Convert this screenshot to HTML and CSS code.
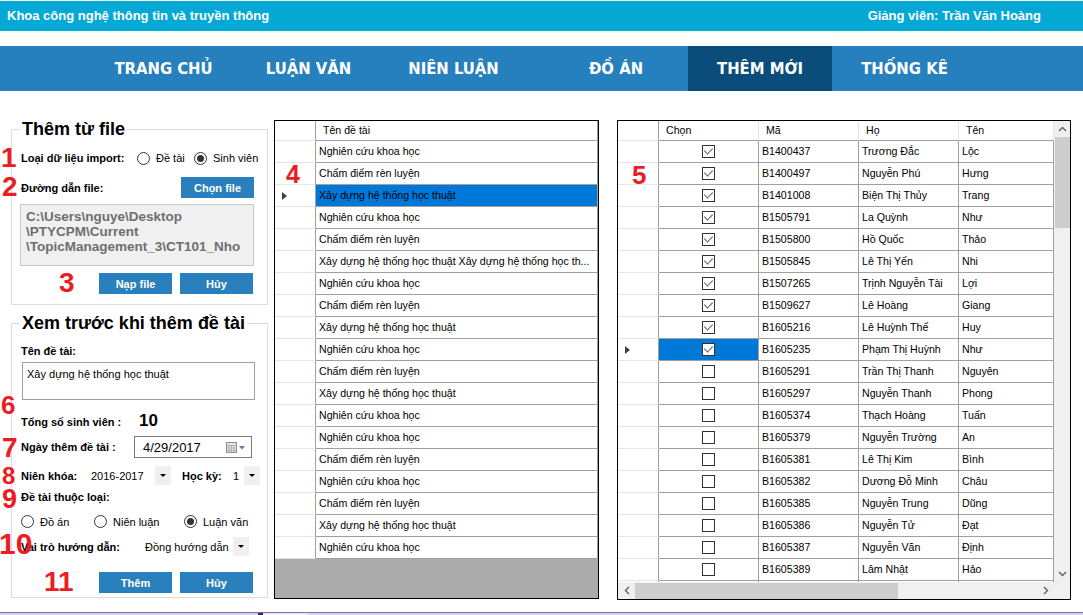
FILE: index.html
```html
<!DOCTYPE html>
<html lang="vi">
<head>
<meta charset="utf-8">
<title>Thêm mới</title>
<link rel="stylesheet" href="styles.css">
</head>
<body>
<header class="topbar">
  <span>Khoa công nghệ thông tin và truyền thông</span>
  <span>Giảng viên: Trần Văn Hoàng</span>
</header>
<nav class="menu">
  <a class="tab">TRANG CHỦ</a>
  <a class="tab">LUẬN VĂN</a>
  <a class="tab">NIÊN LUẬN</a>
  <a class="tab t4">ĐỒ ÁN</a>
  <a class="tab active">THÊM MỚI</a>
  <a class="tab">THỐNG KÊ</a>
</nav>
<main class="content">
  <aside class="side">
    <fieldset class="group g-file">
      <legend>Thêm từ file</legend>
      <div class="row r-import">
        <span class="lbl w-import">Loại dữ liệu import:</span>
        <span class="radio w-r1"><i class="dot"></i>Đề tài</span>
        <span class="radio on"><i class="dot"></i>Sinh viên</span>
      </div>
      <div class="row r-path">
        <span class="lbl">Đường dẫn file:</span>
        <button class="btn">Chọn file</button>
      </div>
      <div class="pathbox">C:\Users\nguye\Desktop<br>\PTYCPM\Current<br>\TopicManagement_3\CT101_Nho</div>
      <div class="row r-btns">
        <button class="btn">Nạp file</button>
        <button class="btn">Hủy</button>
      </div>
    </fieldset>
    <fieldset class="group g-preview">
      <legend>Xem trước khi thêm đề tài</legend>
      <div class="lbl l-name">Tên đề tài:</div>
      <div class="textbox">Xây dựng hệ thống học thuật</div>
      <div class="row r-total">
        <span class="lbl w-total">Tổng số sinh viên :</span>
        <span class="bignum">10</span>
      </div>
      <div class="row r-date">
        <span class="lbl w-date">Ngày thêm đề tài :</span>
        <span class="date">4/29/2017
          <svg class="cal" width="20" height="11" viewBox="0 0 20 11"><rect x="0.5" y="0.5" width="10" height="10" fill="#e6e6e6" stroke="#8c8c8c"/><path d="M0.5 3.5h10M0.5 6h10M0.5 8.5h10M3 3.5v7M5.5 3.5v7M8 3.5v7" stroke="#a8a8a8" stroke-width="0.8"/><path d="M13 4h6l-3 3.5z" fill="#5b7faf"/></svg>
        </span>
      </div>
      <div class="row r-year">
        <span class="lbl w-year">Niên khóa:</span>
        <span class="val w-yval">2016-2017</span>
        <span class="drop"></span>
        <span class="lbl w-term">Học kỳ:</span>
        <span class="val w-tval">1</span>
        <span class="drop"></span>
      </div>
      <div class="lbl l-type">Đề tài thuộc loại:</div>
      <div class="row r-types">
        <span class="radio w-t1"><i class="dot"></i>Đồ án</span>
        <span class="radio w-t2"><i class="dot"></i>Niên luận</span>
        <span class="radio on"><i class="dot"></i>Luận văn</span>
      </div>
      <div class="row r-role">
        <span class="lbl w-role">Vai trò hướng dẫn:</span>
        <span class="val w-rval">Đồng hướng dẫn</span>
        <span class="drop"></span>
      </div>
      <div class="row r-btns2">
        <button class="btn">Thêm</button>
        <button class="btn">Hủy</button>
      </div>
    </fieldset>
  </aside>

  <section class="grid1">
    <div class="g1row head"><div class="rh"></div><div class="cell">Tên đề tài</div></div>
    <div class="g1row"><div class="rh"></div><div class="cell">Nghiên cứu khoa học</div></div>
    <div class="g1row"><div class="rh"></div><div class="cell">Chấm điểm rèn luyện</div></div>
    <div class="g1row sel"><div class="rh"></div><div class="cell">Xây dựng hệ thống học thuật</div></div>
    <div class="g1row"><div class="rh"></div><div class="cell">Nghiên cứu khoa học</div></div>
    <div class="g1row"><div class="rh"></div><div class="cell">Chấm điểm rèn luyện</div></div>
    <div class="g1row"><div class="rh"></div><div class="cell">Xây dựng hệ thống học thuật Xây dựng hệ thống học th...</div></div>
    <div class="g1row"><div class="rh"></div><div class="cell">Nghiên cứu khoa học</div></div>
    <div class="g1row"><div class="rh"></div><div class="cell">Chấm điểm rèn luyện</div></div>
    <div class="g1row"><div class="rh"></div><div class="cell">Xây dựng hệ thống học thuật</div></div>
    <div class="g1row"><div class="rh"></div><div class="cell">Nghiên cứu khoa học</div></div>
    <div class="g1row"><div class="rh"></div><div class="cell">Chấm điểm rèn luyện</div></div>
    <div class="g1row"><div class="rh"></div><div class="cell">Xây dựng hệ thống học thuật</div></div>
    <div class="g1row"><div class="rh"></div><div class="cell">Nghiên cứu khoa học</div></div>
    <div class="g1row"><div class="rh"></div><div class="cell">Nghiên cứu khoa học</div></div>
    <div class="g1row"><div class="rh"></div><div class="cell">Chấm điểm rèn luyện</div></div>
    <div class="g1row"><div class="rh"></div><div class="cell">Nghiên cứu khoa học</div></div>
    <div class="g1row"><div class="rh"></div><div class="cell">Chấm điểm rèn luyện</div></div>
    <div class="g1row"><div class="rh"></div><div class="cell">Xây dựng hệ thống học thuật</div></div>
    <div class="g1row"><div class="rh"></div><div class="cell">Nghiên cứu khoa học</div></div>
  </section>

  <section class="grid2">
    <div class="viewport">
      <div class="g2row head"><div class="rh"></div><div class="cell hc">Chọn</div><div class="cell hc">Mã</div><div class="cell hc">Họ</div><div class="cell hc">Tên</div></div>
      <div class="g2row"><div class="rh"></div><div class="cell chk"><i class="cb on"></i></div><div class="cell">B1400437</div><div class="cell">Trương Đắc</div><div class="cell">Lộc</div></div>
      <div class="g2row"><div class="rh"></div><div class="cell chk"><i class="cb on"></i></div><div class="cell">B1400497</div><div class="cell">Nguyễn Phú</div><div class="cell">Hưng</div></div>
      <div class="g2row"><div class="rh"></div><div class="cell chk"><i class="cb on"></i></div><div class="cell">B1401008</div><div class="cell">Biện Thị Thủy</div><div class="cell">Trang</div></div>
      <div class="g2row"><div class="rh"></div><div class="cell chk"><i class="cb on"></i></div><div class="cell">B1505791</div><div class="cell">La Quỳnh</div><div class="cell">Như</div></div>
      <div class="g2row"><div class="rh"></div><div class="cell chk"><i class="cb on"></i></div><div class="cell">B1505800</div><div class="cell">Hồ Quốc</div><div class="cell">Thảo</div></div>
      <div class="g2row"><div class="rh"></div><div class="cell chk"><i class="cb on"></i></div><div class="cell">B1505845</div><div class="cell">Lê Thị Yến</div><div class="cell">Nhi</div></div>
      <div class="g2row"><div class="rh"></div><div class="cell chk"><i class="cb on"></i></div><div class="cell">B1507265</div><div class="cell">Trịnh Nguyễn Tài</div><div class="cell">Lợi</div></div>
      <div class="g2row"><div class="rh"></div><div class="cell chk"><i class="cb on"></i></div><div class="cell">B1509627</div><div class="cell">Lê Hoàng</div><div class="cell">Giang</div></div>
      <div class="g2row"><div class="rh"></div><div class="cell chk"><i class="cb on"></i></div><div class="cell">B1605216</div><div class="cell">Lê Huỳnh Thế</div><div class="cell">Huy</div></div>
      <div class="g2row sel"><div class="rh"></div><div class="cell chk"><i class="cb on"></i></div><div class="cell">B1605235</div><div class="cell">Phạm Thị Huỳnh</div><div class="cell">Như</div></div>
      <div class="g2row"><div class="rh"></div><div class="cell chk"><i class="cb"></i></div><div class="cell">B1605291</div><div class="cell">Trần Thị Thanh</div><div class="cell">Nguyên</div></div>
      <div class="g2row"><div class="rh"></div><div class="cell chk"><i class="cb"></i></div><div class="cell">B1605297</div><div class="cell">Nguyễn Thanh</div><div class="cell">Phong</div></div>
      <div class="g2row"><div class="rh"></div><div class="cell chk"><i class="cb"></i></div><div class="cell">B1605374</div><div class="cell">Thạch Hoàng</div><div class="cell">Tuấn</div></div>
      <div class="g2row"><div class="rh"></div><div class="cell chk"><i class="cb"></i></div><div class="cell">B1605379</div><div class="cell">Nguyễn Trường</div><div class="cell">An</div></div>
      <div class="g2row"><div class="rh"></div><div class="cell chk"><i class="cb"></i></div><div class="cell">B1605381</div><div class="cell">Lê Thị Kim</div><div class="cell">Bình</div></div>
      <div class="g2row"><div class="rh"></div><div class="cell chk"><i class="cb"></i></div><div class="cell">B1605382</div><div class="cell">Dương Đỗ Minh</div><div class="cell">Châu</div></div>
      <div class="g2row"><div class="rh"></div><div class="cell chk"><i class="cb"></i></div><div class="cell">B1605385</div><div class="cell">Nguyễn Trung</div><div class="cell">Dũng</div></div>
      <div class="g2row"><div class="rh"></div><div class="cell chk"><i class="cb"></i></div><div class="cell">B1605386</div><div class="cell">Nguyễn Tử</div><div class="cell">Đạt</div></div>
      <div class="g2row"><div class="rh"></div><div class="cell chk"><i class="cb"></i></div><div class="cell">B1605387</div><div class="cell">Nguyễn Văn</div><div class="cell">Định</div></div>
      <div class="g2row"><div class="rh"></div><div class="cell chk"><i class="cb"></i></div><div class="cell">B1605389</div><div class="cell">Lâm Nhật</div><div class="cell">Hảo</div></div>
      <div class="g2row"><div class="rh"></div><div class="cell chk"></div><div class="cell"></div><div class="cell"></div><div class="cell"></div></div>
    </div>
    <div class="vscroll">
      <span class="sbtn"><svg width="9" height="6" viewBox="0 0 9 6"><polyline points="1,5 4.5,1.5 8,5" fill="none" stroke="#606060" stroke-width="1.4"/></svg></span>
      <span class="vthumb"></span>
      <span class="sbtn end"><svg width="9" height="6" viewBox="0 0 9 6"><polyline points="1,1 4.5,4.5 8,1" fill="none" stroke="#606060" stroke-width="1.4"/></svg></span>
    </div>
    <div class="hscroll">
      <span class="hbtn"><svg width="6" height="9" viewBox="0 0 6 9"><polyline points="5,1 1.5,4.5 5,8" fill="none" stroke="#606060" stroke-width="1.4"/></svg></span>
      <span class="hthumb"></span>
      <span class="hbtn end"><svg width="6" height="9" viewBox="0 0 6 9"><polyline points="1,1 4.5,4.5 1,8" fill="none" stroke="#606060" stroke-width="1.4"/></svg></span>
    </div>
    <div class="corner"></div>
  </section>
</main>
<footer class="strip"><span class="s-dark"></span><span class="s-light"></span></footer>

<span class="mark m1">1</span>
<span class="mark m2">2</span>
<span class="mark m3">3</span>
<span class="mark m4">4</span>
<span class="mark m5">5</span>
<span class="mark m6">6</span>
<span class="mark m7">7</span>
<span class="mark m8">8</span>
<span class="mark m9">9</span>
<span class="mark m10">10</span>
<span class="mark m11">11</span>
</body>
</html>
```
FILE: styles.css
```css
* { box-sizing: border-box; }
html, body { margin: 0; padding: 0; }
body {
  width: 1083px;
  height: 615px;
  overflow: hidden;
  position: relative;
  background: #fff;
  font-family: "Liberation Sans", Arial, sans-serif;
  font-size: 11px;
  color: #000;
  display: flex;
  flex-direction: column;
}

/* top bar */
.topbar {
  flex: none;
  margin-top: 1px;
  height: 30px;
  background: #03a9d4;
  color: #fff;
  font-weight: bold;
  font-size: 13px;
  line-height: 30px;
  display: flex;
  justify-content: space-between;
  padding: 0 42px 0 7px;
}

/* menu */
.menu {
  flex: none;
  margin-top: 15px;
  height: 45px;
  background: #2680be;
  display: flex;
  padding-left: 91px;
}
.tab {
  width: 145px;
  line-height: 45px;
  text-align: center;
  color: #fff;
  font-weight: bold;
  font-family: "DejaVu Sans Condensed", "Liberation Sans", sans-serif;
  font-size: 16.5px;
  text-decoration: none;
}
.tab.t4 { margin-left: 18px; width: 144px; }
.tab.active { background: #0b4d7a; width: 144px; }

/* content */
.content {
  flex: 1;
  display: flex;
  align-items: flex-start;
  padding: 29px 0 0 11px;
}
.side { width: 257px; flex: none; margin-top: -2px; }

fieldset.group {
  margin: 0;
  min-width: 0;
  border: 1px solid #dcdcdc;
  padding: 0 13px 0 9px;
}
fieldset.group legend {
  font-size: 18px;
  font-weight: bold;
  line-height: 22px;
  padding: 0 2px;
  margin-left: -1px;
}
fieldset.g-file { padding-bottom: 10px; }
fieldset.g-preview { margin-top: 7px; padding-bottom: 4px; }

.row { display: flex; align-items: center; }
.lbl { font-weight: bold; line-height: 14px; white-space: nowrap; flex: none; }
.val { white-space: nowrap; flex: none; }

.radio { display: flex; align-items: center; gap: 6px; white-space: nowrap; flex: none; }
.dot {
  width: 13px; height: 13px;
  border: 1px solid #333;
  border-radius: 50%;
  background: #fff;
  position: relative;
  flex: none;
}
.radio.on .dot::after {
  content: "";
  position: absolute;
  inset: 2px;
  border-radius: 50%;
  background: #333;
}

.btn {
  width: 73px;
  height: 21px;
  border: 0;
  padding: 0;
  background: #2980bd;
  color: #fff;
  font-family: inherit;
  font-weight: bold;
  font-size: 11px;
  flex: none;
}

/* group 1 */
.r-import { margin-top: 9px; height: 18px; }
.w-import { width: 116px; }
.w-r1 { width: 57px; }
.r-path { margin-top: 10px; height: 21px; justify-content: space-between; }
.pathbox {
  margin: 6px 0 0 -1px;
  width: 234px;
  height: 62px;
  background: #f0f0f0;
  border: 1px solid #c8c8c8;
  padding: 4px 0 0 5px;
  font-family: "Liberation Sans", Arial, sans-serif;
  font-weight: bold;
  font-size: 13.5px;
  line-height: 15px;
  color: #6e6e6e;
  white-space: nowrap;
}
.r-btns, .r-btns2 { height: 21px; justify-content: flex-end; gap: 8px; padding-right: 1px; }
.r-btns { margin-top: 7px; }

/* group 2 */
.l-name { margin-top: 10px; }
.textbox {
  margin: 4px 0 0 1px;
  width: 233px;
  height: 38px;
  border: 1px solid #a0a0a0;
  padding: 4px 0 0 4px;
  font-size: 11px;
  line-height: 14px;
}
.r-total { margin-top: 11px; align-items: baseline; }
.w-total { width: 118px; }
.bignum { font-weight: bold; font-size: 17px; line-height: 20px; }
.r-date { margin-top: 5px; height: 22px; }
.w-date { width: 113px; }
.date {
  width: 118px;
  height: 22px;
  border: 1px solid #7a7a7a;
  display: flex;
  align-items: center;
  padding: 0 5px 0 8px;
  font-size: 13px;
}
.cal { margin-left: auto; }
.r-year { margin-top: 8px; height: 19px; }
.w-year { width: 70px; }
.w-yval { width: 64px; }
.w-term { width: 51px; margin-left: 11px; }
.w-tval { width: 11px; }
.drop {
  width: 16px;
  height: 19px;
  background: #f0f0f0;
  display: flex;
  align-items: center;
  justify-content: center;
  flex: none;
}
.drop::before {
  content: "";
  border-left: 3px solid transparent;
  border-right: 3px solid transparent;
  border-top: 3px solid #000;
}
.l-type { margin-top: 5px; }
.r-types { margin-top: 10px; height: 15px; }
.w-t1 { width: 73px; }
.w-t2 { width: 90px; }
.r-role { margin-top: 8px; height: 19px; }
.w-role { width: 124px; }
.w-rval { width: 88px; }
.r-btns2 { margin-top: 16px; }

/* grids */
.cell {
  background: #fff;
  border-right: 1px solid #a0a0a0;
  border-bottom: 1px solid #a0a0a0;
  padding-left: 3px;
  font-size: 10.6px;
  line-height: 21px;
  white-space: nowrap;
  overflow: hidden;
}
.rh {
  background: #fff;
  border-right: 1px solid #a0a0a0;
  border-bottom: 1px solid #e4e4e4;
  position: relative;
}
.head .cell { line-height: 19px; padding-left: 7px; }
.sel .rh::after {
  content: "";
  position: absolute;
  left: 7px;
  top: 7px;
  border-top: 4px solid transparent;
  border-bottom: 4px solid transparent;
  border-left: 5px solid #404040;
}

.grid1 {
  flex: none;
  margin-left: 6px;
  width: 325px;
  height: 479px;
  border: 1px solid #000;
  background: #ababab;
  overflow: hidden;
}
.g1row { display: grid; grid-template-columns: 41px 1fr; height: 22px; }
.g1row.head { height: 20px; }
.g1row.sel .cell { background: #0078d7; }

.grid2 {
  flex: none;
  margin-left: 18px;
  width: 454px;
  height: 480px;
  border: 1px solid #000;
  display: grid;
  grid-template-columns: 1fr 16px;
  grid-template-rows: 1fr 17px;
}
.viewport { overflow: hidden; background: #fff; }
.g2row { display: grid; grid-template-columns: 41px 100px 100px 100px 95px; height: 22px; }
.g2row.head { height: 20px; }
.g2row .hc { border-right-color: #e4e4e4; }
.chk { display: flex; align-items: center; justify-content: center; padding: 0; }
.g2row.sel .chk { background: #0078d7; }
.cb {
  width: 13px;
  height: 13px;
  border: 1px solid #333;
  background: #fff;
  position: relative;
}
.cb.on::after {
  content: "";
  position: absolute;
  left: 3px;
  top: 0px;
  width: 4px;
  height: 7px;
  border-right: 1px solid #5a5a5a;
  border-bottom: 1px solid #5a5a5a;
  transform: rotate(45deg);
}

.vscroll { background: #f0f0f0; display: flex; flex-direction: column; }
.sbtn { height: 16px; display: flex; align-items: center; justify-content: center; flex: none; }
.sbtn.end { margin-top: auto; height: 17px; }
.vthumb { height: 91px; margin-left: 1px; background: #cdcdcd; flex: none; }
.hscroll { background: #f0f0f0; display: flex; }
.hbtn { width: 17px; display: flex; align-items: center; justify-content: center; flex: none; }
.hbtn.end { margin-left: auto; }
.hthumb { width: 263px; margin-top: 1px; background: #cdcdcd; flex: none; }
.corner { background: #f0f0f0; }

/* bottom strip */
.strip {
  flex: none;
  height: 3px;
  border-top: 1px solid #7d6bb5;
  background: #d9d5ea;
  display: flex;
}
.s-dark { margin-left: 258px; width: 5px; background: #2a2a4a; }
.s-light { width: 45px; background: #ececf4; }

/* red annotations (overlay) */
.mark {
  position: absolute;
  color: #ec1c24;
  font-weight: bold;
  font-family: "Liberation Sans", Arial, sans-serif;
  font-size: 28px;
  line-height: 1;
}
.m1 { left: 1px; top: 144px; }
.m2 { left: 2px; top: 173px; }
.m3 { left: 59px; top: 269px; }
.m4 { left: 286px; top: 162px; font-size: 25px; }
.m5 { left: 632px; top: 162px; font-size: 26px; }
.m6 { left: 1px; top: 392px; font-size: 26px; }
.m7 { left: 2px; top: 434px; }
.m8 { left: 2px; top: 464px; font-size: 24px; }
.m9 { left: 2px; top: 486px; font-size: 27px; }
.m10 { left: -1px; top: 529px; font-size: 30px; }
.m11 { left: 44px; top: 568px; }
```
